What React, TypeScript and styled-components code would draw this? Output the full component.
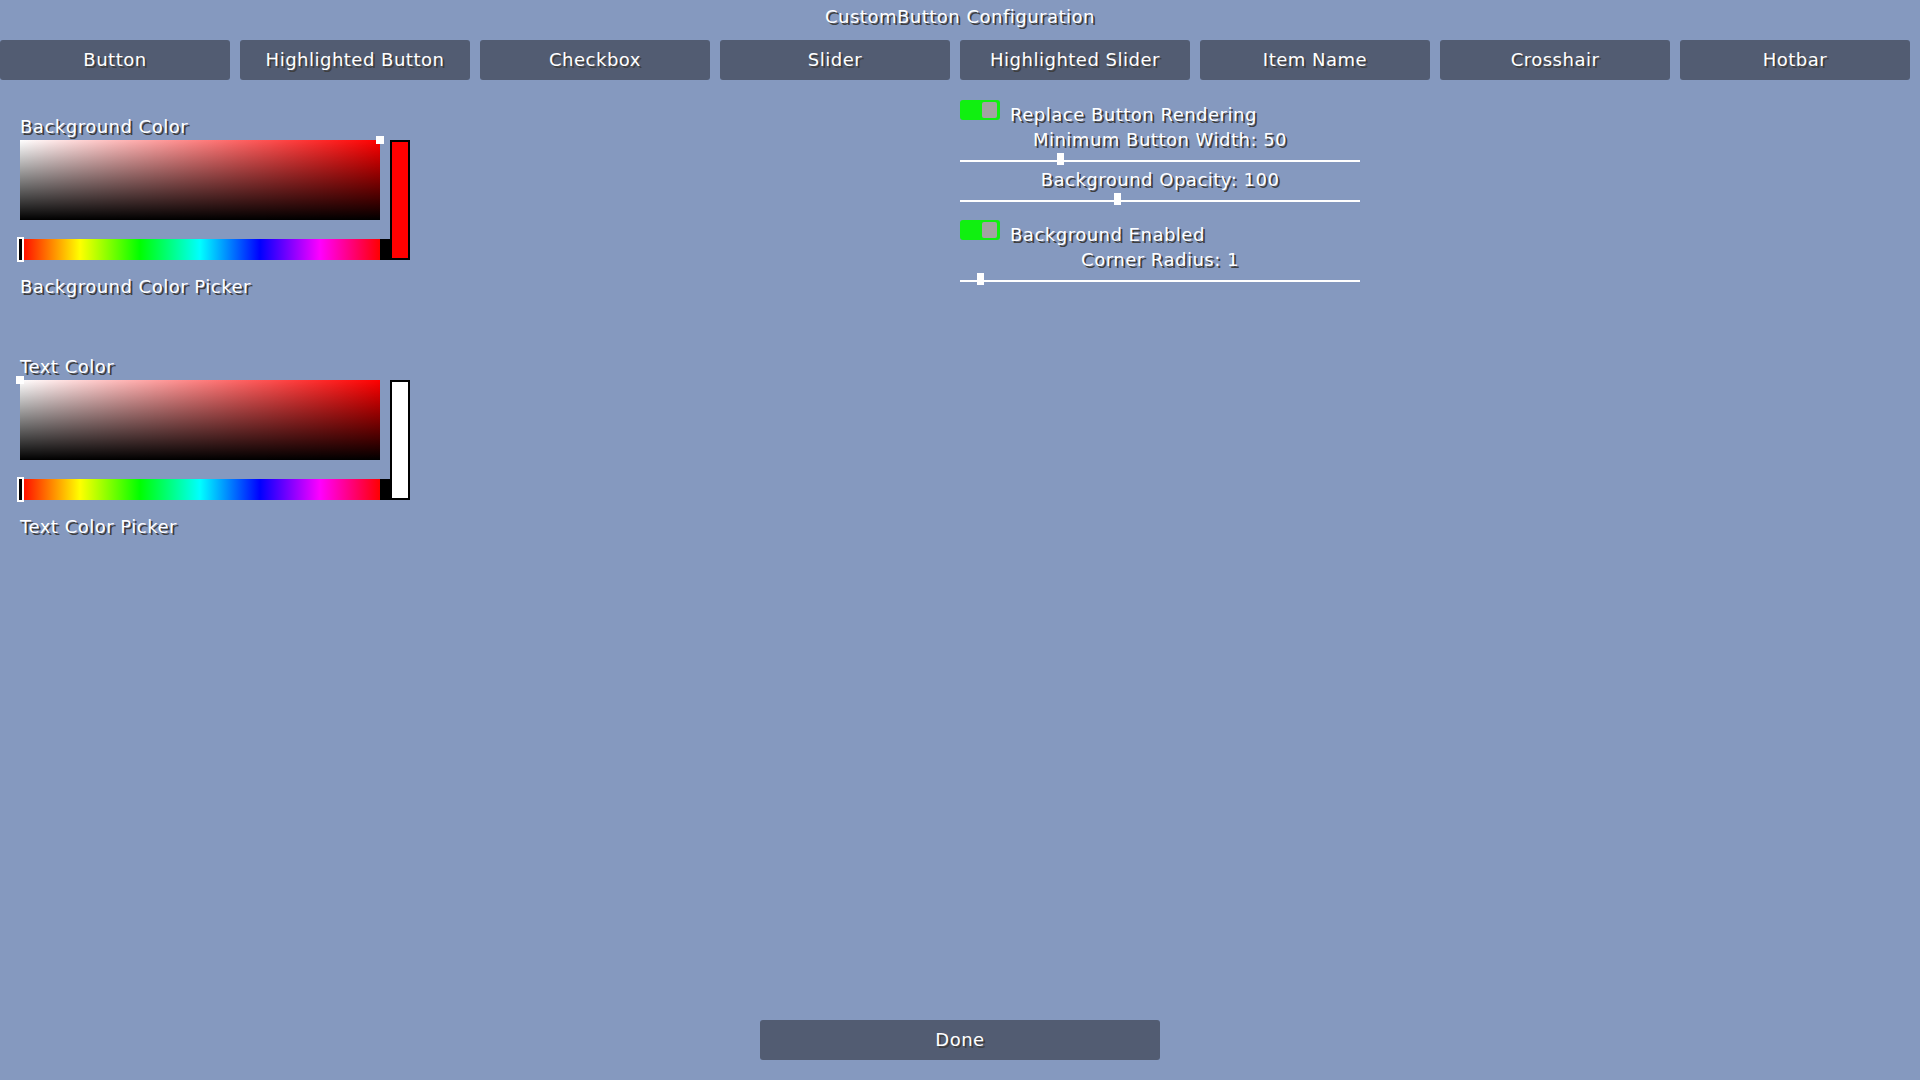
import React from "react";
import styled, { createGlobalStyle } from "styled-components";

const Global = createGlobalStyle`
  html, body { margin: 0; padding: 0; }
  body { background: #8599bf; }
  * { box-sizing: border-box; }
`;

const Page = styled.div`
  width: 1920px;
  height: 1080px;
  background: #8599bf;
  display: flex;
  flex-direction: column;
  font-family: "DejaVu Sans", "Liberation Sans", sans-serif;
  font-size: 18px;
  letter-spacing: 0.5px;
  color: #ffffff;
  text-shadow: 2px 2px 0 #3f3f3f;
  overflow: hidden;
`;

const Title = styled.div`
  height: 40px;
  padding-top: 7px;
  line-height: 20px;
  text-align: center;
`;

const TabRow = styled.div`
  display: flex;
  gap: 10px;
  height: 40px;
`;

const Tab = styled.div`
  width: 230px;
  height: 40px;
  border-radius: 3px;
  background: #525c72;
  line-height: 40px;
  text-align: center;
`;

const Content = styled.div`
  display: grid;
  grid-template-columns: 960px 400px;
  align-items: start;
  flex: 1;
`;

const LeftColumn = styled.div`
  display: flex;
  flex-direction: column;
  gap: 60px;
  padding: 37px 0 0 20px;
`;

const Section = styled.div`
  display: flex;
  flex-direction: column;
`;

const Label = styled.div<{ $gapAfter?: number; $gapBefore?: number }>`
  line-height: 20px;
  height: 20px;
  white-space: nowrap;
  margin-bottom: ${(p) => p.$gapAfter ?? 0}px;
  margin-top: ${(p) => p.$gapBefore ?? 0}px;
`;

const PickerGrid = styled.div`
  display: grid;
  grid-template-columns: 360px 10px 20px;
  grid-template-rows: 80px 19px 21px;
  width: 390px;
`;

const SVBox = styled.div`
  grid-column: 1;
  grid-row: 1;
  position: relative;
  background: linear-gradient(to bottom, rgba(0, 0, 0, 0), #000000),
    linear-gradient(to right, #ffffff, #ff0000);
`;

const SVMarker = styled.div<{ $right?: boolean }>`
  position: absolute;
  top: -4px;
  ${(p) => (p.$right ? "right: -4px;" : "left: -4px;")}
  width: 8px;
  height: 8px;
  background: #ffffff;
`;

const Preview = styled.div<{ $color: string }>`
  grid-column: 3;
  grid-row: 1 / 4;
  border: 2px solid #000000;
  background: ${(p) => p.$color};
`;

const HueRow = styled.div`
  grid-column: 1 / 3;
  grid-row: 3;
  display: flex;
  position: relative;
`;

const HueBar = styled.div`
  width: 360px;
  background: linear-gradient(
    to right,
    #ff0000 0%,
    #ffff00 16.66%,
    #00ff00 33.33%,
    #00ffff 50%,
    #0000ff 66.66%,
    #ff00ff 83.33%,
    #ff0000 100%
  );
`;

const HueEnd = styled.div`
  width: 10px;
  background: #000000;
`;

const HueMarker = styled.div`
  position: absolute;
  left: -3px;
  top: -2px;
  width: 7px;
  height: 25px;
  border: 2px solid #ffffff;
  background: #000000;
`;

const RightColumn = styled.div`
  display: flex;
  flex-direction: column;
  padding-top: 20px;
  width: 400px;
`;

const ToggleRow = styled.div<{ $gapAfter: number }>`
  display: flex;
  gap: 10px;
  align-items: flex-start;
  height: 20px;
  margin-bottom: ${(p) => p.$gapAfter}px;
`;

const Toggle = styled.div<{ $on: boolean }>`
  width: 40px;
  height: 20px;
  border-radius: 3px;
  background: ${(p) => (p.$on ? "#10f010" : "#707070")};
  display: flex;
  justify-content: ${(p) => (p.$on ? "flex-end" : "flex-start")};
  padding: 2px 3px;
`;

const Knob = styled.div`
  width: 15px;
  height: 16px;
  border-radius: 2px;
  background: #a3a3a3;
`;

const ToggleLabel = styled.div`
  line-height: 20px;
  margin-top: 5px;
  white-space: nowrap;
`;

const SliderBlock = styled.div<{ $gapAfter: number }>`
  display: flex;
  flex-direction: column;
  height: 40px;
  margin-bottom: ${(p) => p.$gapAfter}px;
`;

const SliderLabel = styled.div`
  line-height: 20px;
  height: 20px;
  text-align: center;
  white-space: nowrap;
`;

const Track = styled.div`
  position: relative;
  height: 20px;
  &::before {
    content: "";
    position: absolute;
    left: 0;
    right: 0;
    top: 10px;
    height: 2px;
    background: #ffffff;
  }
`;

const Thumb = styled.div`
  position: absolute;
  top: 3px;
  width: 7px;
  height: 12px;
  background: #ffffff;
`;

const Footer = styled.div`
  display: flex;
  justify-content: center;
  padding-bottom: 20px;
`;

const DoneButton = styled(Tab)`
  width: 400px;
`;

const tabs = [
  "Button",
  "Highlighted Button",
  "Checkbox",
  "Slider",
  "Highlighted Slider",
  "Item Name",
  "Crosshair",
  "Hotbar",
];

function ColorPicker({
  title,
  pickerLabel,
  preview,
  markerRight,
}: {
  title: string;
  pickerLabel: string;
  preview: string;
  markerRight: boolean;
}) {
  return (
    <Section>
      <Label $gapAfter={3}>{title}</Label>
      <PickerGrid>
        <SVBox>
          <SVMarker $right={markerRight} />
        </SVBox>
        <Preview $color={preview} />
        <HueRow>
          <HueBar />
          <HueEnd />
          <HueMarker />
        </HueRow>
      </PickerGrid>
      <Label $gapBefore={17}>{pickerLabel}</Label>
    </Section>
  );
}

function Slider({
  label,
  value,
  max,
  gapAfter,
}: {
  label: string;
  value: number;
  max: number;
  gapAfter: number;
}) {
  const x = (value / max) * 400 - 3;
  return (
    <SliderBlock $gapAfter={gapAfter}>
      <SliderLabel>
        {label}: {value}
      </SliderLabel>
      <Track>
        <Thumb style={{ left: `${x}px` }} />
      </Track>
    </SliderBlock>
  );
}

export default function App() {
  return (
    <Page>
      <Global />
      <Title>CustomButton Configuration</Title>
      <TabRow>
        {tabs.map((t) => (
          <Tab key={t}>{t}</Tab>
        ))}
      </TabRow>
      <Content>
        <LeftColumn>
          <ColorPicker
            title="Background Color"
            pickerLabel="Background Color Picker"
            preview="#ff0000"
            markerRight
          />
          <ColorPicker
            title="Text Color"
            pickerLabel="Text Color Picker"
            preview="#ffffff"
            markerRight={false}
          />
        </LeftColumn>
        <RightColumn>
          <ToggleRow $gapAfter={10}>
            <Toggle $on>
              <Knob />
            </Toggle>
            <ToggleLabel>Replace Button Rendering</ToggleLabel>
          </ToggleRow>
          <Slider label="Minimum Button Width" value={50} max={200} gapAfter={0} />
          <Slider label="Background Opacity" value={100} max={255} gapAfter={10} />
          <ToggleRow $gapAfter={10}>
            <Toggle $on>
              <Knob />
            </Toggle>
            <ToggleLabel>Background Enabled</ToggleLabel>
          </ToggleRow>
          <Slider label="Corner Radius" value={1} max={20} gapAfter={0} />
        </RightColumn>
      </Content>
      <Footer>
        <DoneButton>Done</DoneButton>
      </Footer>
    </Page>
  );
}
